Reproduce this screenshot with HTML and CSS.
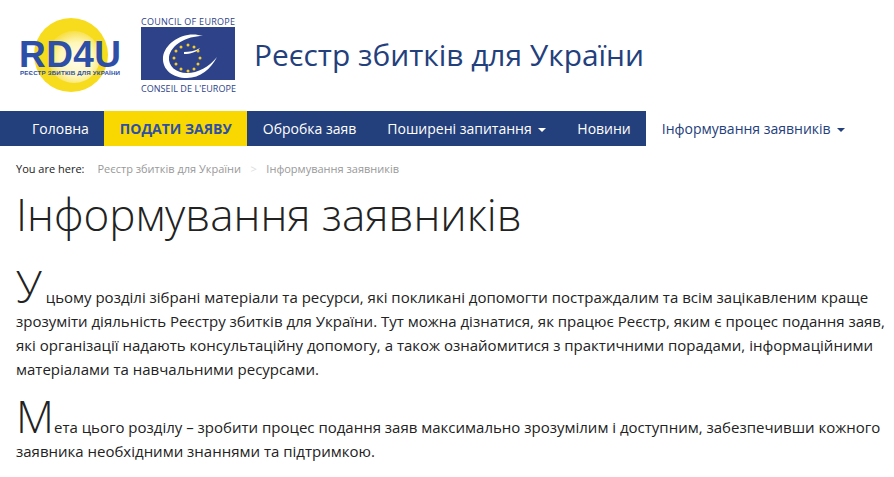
FILE: index.html
```html
<!DOCTYPE html>
<html lang="uk">
<head>
  <meta charset="UTF-8" />
  <title>Інформування заявників</title>
  <link rel="stylesheet" href="styles.css">
</head>
<body>

<div class="header-row">
  <svg class="logo-rd" width="112" height="90" viewBox="0 0 112 90">
    <defs>
      <radialGradient id="ring" cx="55%" cy="55%" r="55%">
        <stop offset="0" stop-color="#fffdf0" />
        <stop offset="0.6" stop-color="#fff6b8" />
        <stop offset="1" stop-color="#f8e04a" />
      </radialGradient>
    </defs>
    <circle cx="59" cy="44" r="37" fill="#f7dc1e" />
    <circle cx="62" cy="46" r="26" fill="url(#ring)" />
    <text class="logo-rd-big" x="7" y="56" textLength="102">RD4U</text>
    <text class="logo-rd-small" x="8" y="64" textLength="100">РЕЄСТР ЗБИТКІВ ДЛЯ УКРАЇНИ</text>
  </svg>
  <svg class="logo-coe" width="98" height="84" viewBox="0 0 98 84">
    <text class="logo-coe-text" x="1" y="10" textLength="94">COUNCIL OF EUROPE</text>
    <rect x="1" y="12" width="94" height="53" fill="#2d4289" />
    <path d="M63 21 C45 15 25 27 23 42 C22 55 33 63 47 63 C60 63 71 54 77 42 C69 52 58 58 47 58 C36 58 28 51 29 42 C31 30 46 21 63 21 Z" fill="#fff" />
    <path d="M44 37 C49 37 55 36 60 33 C57 37 50 39 44 39 Z" fill="#fff" />
    <g fill="#f3cb2c">
      <circle cx="48" cy="30" r="1.5" /><circle cx="54" cy="32" r="1.5" /><circle cx="58" cy="36" r="1.5" />
      <circle cx="60" cy="43" r="1.5" /><circle cx="58" cy="49" r="1.5" /><circle cx="54" cy="54" r="1.5" />
      <circle cx="48" cy="56" r="1.5" /><circle cx="41" cy="54" r="1.5" /><circle cx="36" cy="49" r="1.5" />
      <circle cx="34" cy="43" r="1.5" /><circle cx="36" cy="36" r="1.5" /><circle cx="41" cy="32" r="1.5" />
    </g>
    <text class="logo-coe-text" x="1" y="77" textLength="95">CONSEIL DE L'EUROPE</text>
  </svg>
  <div class="site-title">Реєстр збитків для України</div>
</div>

<nav class="main-nav">
  <div class="nav-bar">
    <a class="nav-item" href="#">Головна</a>
    <a class="nav-item nav-apply" href="#">ПОДАТИ ЗАЯВУ</a>
    <a class="nav-item" href="#">Обробка заяв</a>
    <a class="nav-item" href="#">Поширені запитання <span class="caret"></span></a>
    <a class="nav-item" href="#">Новини</a>
  </div>
  <a class="nav-item nav-active" href="#">Інформування заявників <span class="caret"></span></a>
</nav>

<div class="crumbs">
  <span class="crumbs-label">You are here:</span>
  <a href="#">Реєстр збитків для України</a>
  <span class="crumbs-sep">&gt;</span>
  <span>Інформування заявників</span>
</div>

<h1>Інформування заявників</h1>

<div class="content">
  <p>У цьому розділі зібрані матеріали та ресурси, які покликані допомогти постраждалим та всім зацікавленим краще зрозуміти діяльність Реєстру збитків для України. Тут можна дізнатися, як працює Реєстр, яким є процес подання заяв, які організації надають консультаційну допомогу, а також ознайомитися з практичними порадами, інформаційними матеріалами та навчальними ресурсами.</p>
  <p>Мета цього розділу – зробити процес подання заяв максимально зрозумілим і доступним, забезпечивши кожного заявника необхідними знаннями та підтримкою.</p>
</div>

</body>
</html>
```
FILE: styles.css
```css
body {
  margin: 0;
  background-color: #fff;
  font-family: "Open Sans", sans-serif;
  font-size: 14px;
  color: #222;
  overflow: hidden;
}

.header-row {
  display: flex;
  align-items: flex-start;
  height: 111px;
  padding-left: 12px;
}

.logo-rd {
  margin-top: 11px;
  flex: none;
}

.logo-rd-big {
  font-family: "Liberation Sans", sans-serif;
  font-size: 37px;
  font-weight: bold;
  fill: #2d4fa8;
}

.logo-rd-small {
  font-family: "Liberation Sans", sans-serif;
  font-size: 6.2px;
  font-weight: bold;
  fill: #2d4fa8;
}

.logo-coe {
  margin-top: 15px;
  margin-left: 16px;
  flex: none;
}

.logo-coe-text {
  font-family: "Open Sans", sans-serif;
  font-size: 9px;
  fill: #2d4289;
}

.site-title {
  margin-left: 16px;
  margin-top: 35px;
  font-size: 29.9px;
  line-height: 40px;
  color: #24407c;
}

.main-nav {
  display: flex;
  height: 35px;
}

.nav-bar {
  display: flex;
  padding-left: 16.5px;
  background-color: #24407c;
}

.nav-item {
  display: block;
  padding: 0 15.5px;
  line-height: 35px;
  color: #fff;
  text-decoration: none;
  white-space: nowrap;
}

.nav-apply {
  background-color: #f8d800;
  color: #2d4fa8;
  font-weight: bold;
}

.nav-active {
  color: #24407c;
}

.caret {
  display: inline-block;
  margin-left: 3px;
  vertical-align: middle;
  border-top: 4px solid currentColor;
  border-left: 4px solid transparent;
  border-right: 4px solid transparent;
}

.crumbs {
  display: flex;
  gap: 13px;
  padding: 15px 0 0 16px;
  font-size: 11px;
  line-height: 16px;
  color: #999;
}

.crumbs a {
  color: #999;
  text-decoration: none;
}

.crumbs-label {
  color: #222;
}

.crumbs-sep {
  margin: 0 -3.5px;
  color: #ddd;
}

h1 {
  margin: 9px 0 0 16px;
  font-size: 44px;
  font-weight: 300;
  line-height: 56px;
  color: #222;
}

.content {
  padding: 0 8px 0 16px;
  margin-top: 32px;
  font-size: 15px;
}

.content p {
  margin: 0 0 23px;
  line-height: 24px;
}

.content p::first-letter {
  font-size: 44px;
  font-weight: 300;
}
```
